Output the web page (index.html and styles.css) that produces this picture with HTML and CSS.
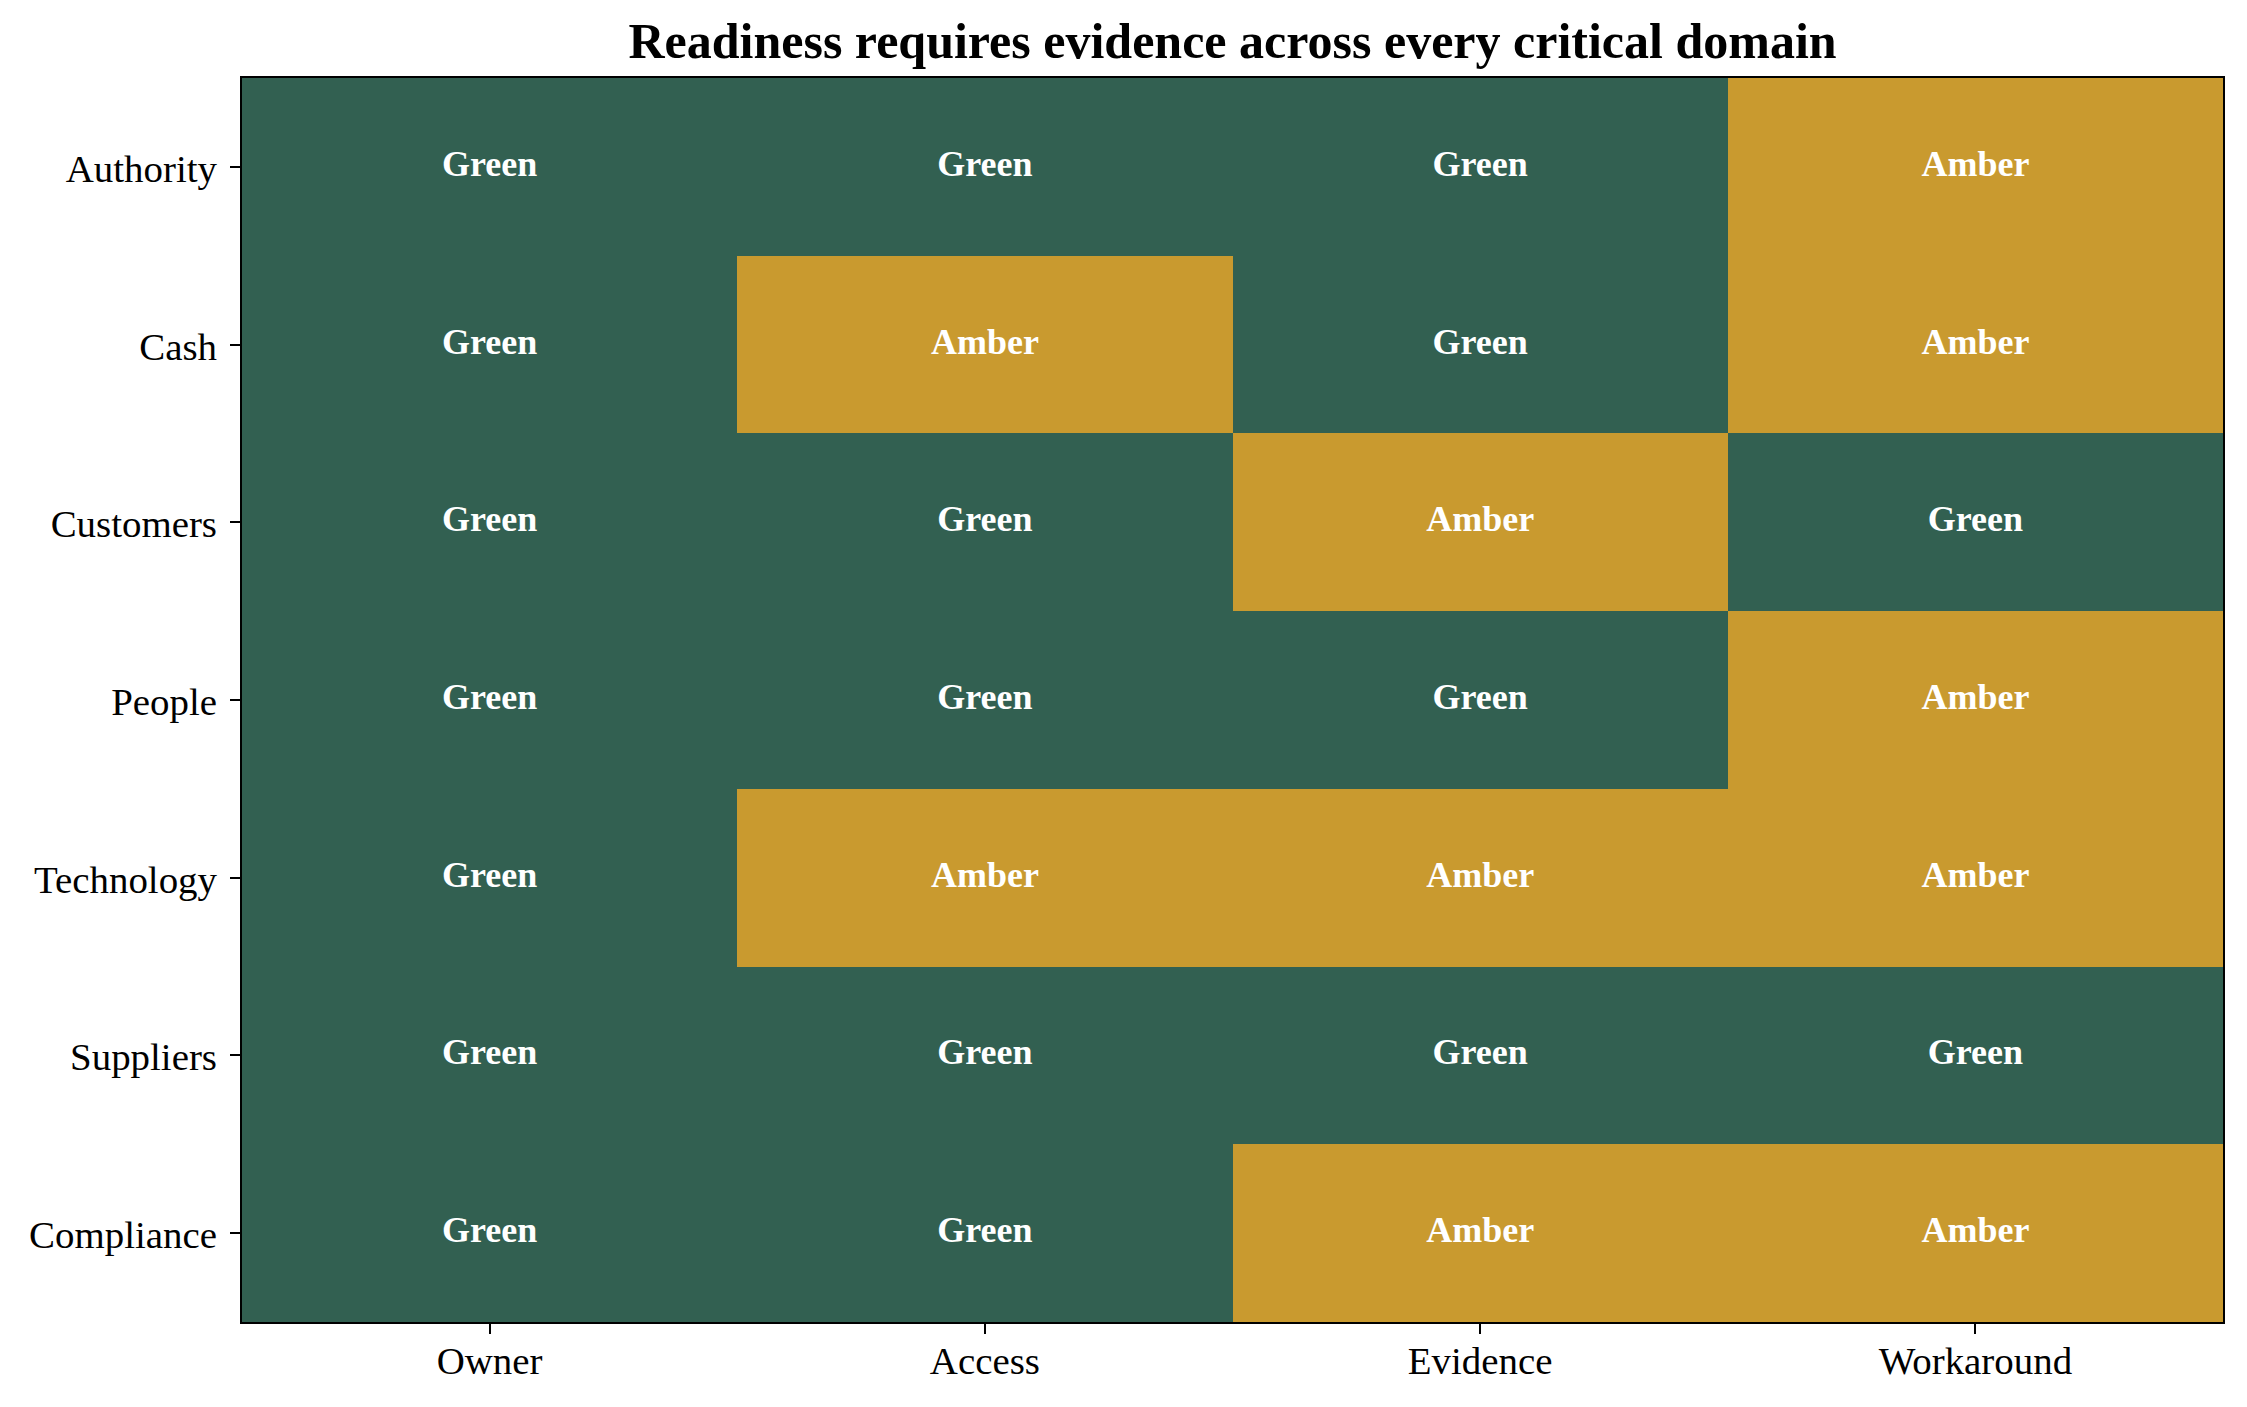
FILE: index.html
```html
<!DOCTYPE html>
<html lang="en">
<head>
<meta charset="utf-8">
<title>Readiness heatmap</title>
<link rel="stylesheet" href="styles.css">
</head>
<body>
<div class="figure">
  <h1 class="title">Readiness requires evidence across every critical domain</h1>

  <div class="ylabels">
    <div class="ylab"><span class="ytext">Authority</span><span class="ytick"></span></div>
    <div class="ylab"><span class="ytext">Cash</span><span class="ytick"></span></div>
    <div class="ylab"><span class="ytext">Customers</span><span class="ytick"></span></div>
    <div class="ylab"><span class="ytext">People</span><span class="ytick"></span></div>
    <div class="ylab"><span class="ytext">Technology</span><span class="ytick"></span></div>
    <div class="ylab"><span class="ytext">Suppliers</span><span class="ytick"></span></div>
    <div class="ylab"><span class="ytext">Compliance</span><span class="ytick"></span></div>
  </div>

  <div class="axes">
    <div class="cell green">Green</div><div class="cell green">Green</div><div class="cell green">Green</div><div class="cell amber">Amber</div>
    <div class="cell green">Green</div><div class="cell amber">Amber</div><div class="cell green">Green</div><div class="cell amber">Amber</div>
    <div class="cell green">Green</div><div class="cell green">Green</div><div class="cell amber">Amber</div><div class="cell green">Green</div>
    <div class="cell green">Green</div><div class="cell green">Green</div><div class="cell green">Green</div><div class="cell amber">Amber</div>
    <div class="cell green">Green</div><div class="cell amber">Amber</div><div class="cell amber">Amber</div><div class="cell amber">Amber</div>
    <div class="cell green">Green</div><div class="cell green">Green</div><div class="cell green">Green</div><div class="cell green">Green</div>
    <div class="cell green">Green</div><div class="cell green">Green</div><div class="cell amber">Amber</div><div class="cell amber">Amber</div>
  </div>

  <div class="xlabels">
    <div class="xlab"><span class="xtick"></span><span class="xtext">Owner</span></div>
    <div class="xlab"><span class="xtick"></span><span class="xtext">Access</span></div>
    <div class="xlab"><span class="xtick"></span><span class="xtext">Evidence</span></div>
    <div class="xlab"><span class="xtick"></span><span class="xtext">Workaround</span></div>
  </div>
</div>
</body>
</html>
```

FILE: styles.css
```css
html, body {
  margin: 0;
  padding: 0;
  background: #ffffff;
}

body {
  width: 2247px;
  height: 1407px;
  overflow: hidden;
  font-family: "Liberation Serif", "Times New Roman", serif;
  color: #000000;
}

.figure {
  display: grid;
  grid-template-columns: 240px 1985px;
  grid-template-rows: 50px 1248px auto;
  row-gap: 10px;
  padding-top: 16px;
}

.title {
  grid-column: 2;
  grid-row: 1;
  margin: 0;
  font-size: 50px;
  line-height: 50px;
  font-weight: bold;
  text-align: center;
  white-space: nowrap;
}

.ylabels {
  grid-column: 1;
  grid-row: 2;
  display: grid;
  grid-template-rows: repeat(7, 1fr);
  padding: 2px 0;
}

.ylab {
  display: flex;
  align-items: center;
  justify-content: flex-end;
}

.ytext {
  font-size: 38.9px;
  margin-right: 13px;
  padding-top: 3px;
  white-space: nowrap;
}

.ytick {
  width: 10px;
  height: 2px;
  background: #000000;
}

.axes {
  grid-column: 2;
  grid-row: 2;
  border: 2px solid #000000;
  display: grid;
  grid-template-columns: repeat(4, 1fr);
  grid-template-rows: repeat(7, 1fr);
}

.cell {
  display: flex;
  align-items: center;
  justify-content: center;
  padding-bottom: 6px;
  font-size: 36px;
  font-weight: bold;
  color: #ffffff;
}

.green {
  background: #326051;
}

.amber {
  background: #c99a2f;
}

.xlabels {
  grid-column: 2;
  grid-row: 3;
  display: grid;
  grid-template-columns: repeat(4, 1fr);
  padding: 0 2px;
  margin-top: -10px;
}

.xlab {
  display: flex;
  flex-direction: column;
  align-items: center;
}

.xtick {
  width: 2px;
  height: 10px;
  background: #000000;
}

.xtext {
  font-size: 38.9px;
  margin-top: 4px;
  white-space: nowrap;
}
```
